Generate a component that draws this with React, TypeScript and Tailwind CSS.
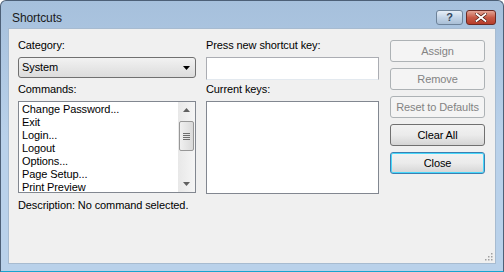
import { ChevronDown } from 'lucide-react'

const commands = [
  'Change Password...',
  'Exit',
  'Login...',
  'Logout',
  'Options...',
  'Page Setup...',
  'Print Preview',
]

const font = "font-['Liberation_Sans',Arial,sans-serif]"

function DialogButton({ label, disabled, isDefault }: { label: string; disabled?: boolean; isDefault?: boolean }) {
  if (disabled) {
    return (
      <button
        disabled
        className="h-[22px] w-[95px] rounded-[3px] border border-[#adb2b5] bg-[#f4f4f4] text-[11px] text-[#838383]"
      >
        {label}
      </button>
    )
  }
  return (
    <button
      className={
        'h-[22px] w-[95px] rounded-[3px] border bg-gradient-to-b from-[#f2f2f2] via-[#ebebeb] to-[#d5d5d5] text-[11px] text-black ' +
        (isDefault ? 'border-[#3c7fb1] shadow-[inset_0_0_0_1px_#48d8fb]' : 'border-[#707070]')
      }
    >
      {label}
    </button>
  )
}

function ScrollArrow({ up }: { up?: boolean }) {
  return (
    <div className="flex h-[16px] w-full items-center justify-center">
      <svg width="7" height="4" viewBox="0 0 7 4">
        {up ? <path d="M0 4 L3.5 0 L7 4 Z" fill="#606060" /> : <path d="M0 0 L7 0 L3.5 4 Z" fill="#606060" />}
      </svg>
    </div>
  )
}

export default function App() {
  return (
    <div className={`${font} h-[272px] w-[504px] overflow-hidden tracking-[-0.1px]`}>
      <div className="flex h-full w-full flex-col rounded-t-[6px] border border-[#4d6077] border-b-[#19a4cf] bg-gradient-to-b from-[#a6c0dc] via-[#b9d1ea] to-[#b9d1ea]">
        {/* title bar */}
        <div className="flex h-[27px] shrink-0 items-start justify-between pl-[11px] pr-[7px]">
          <div className="pt-[8px] text-[12px] text-[#1a1a1a]">Shortcuts</div>
          <div className="flex gap-[3px] pt-[9px]">
            <div className="flex h-[15px] w-[27px] items-center justify-center rounded-[3px] border border-[#6d8299] bg-gradient-to-b from-[#e6eef7] via-[#c3d4e7] to-[#a9bfd6] text-[11px] font-bold leading-none text-[#33465c]">
              ?
            </div>
            <div className="flex h-[15px] w-[30px] items-center justify-center rounded-[3px] border border-[#6b2a24] bg-gradient-to-b from-[#e3a597] via-[#c75a47] to-[#b73d2a]">
              <svg width="12" height="9" viewBox="0 0 12 9">
                <path d="M1.5 1 L10.5 8 M10.5 1 L1.5 8" stroke="#4a1710" strokeWidth="3.2" strokeLinecap="square" />
                <path d="M1.5 1 L10.5 8 M10.5 1 L1.5 8" stroke="#ffffff" strokeWidth="1.8" strokeLinecap="square" />
              </svg>
            </div>
          </div>
        </div>

        {/* client area */}
        <div className="relative mx-[7px] mb-[7px] flex flex-1 border border-[#a7bbd0] bg-[#f0f0f0] pl-[9px] pt-[10px] text-[11px] text-black">
          {/* left column */}
          <div className="flex w-[178px] flex-col">
            <div className="h-[13px] leading-[13px]">Category:</div>
            <div className="mt-[5px] flex h-[21px] items-center justify-between rounded-[3px] border border-[#707070] bg-gradient-to-b from-[#f2f2f2] to-[#dcdcdc] pl-[3px] pr-[5px]">
              <span>System</span>
              <svg width="7" height="4" viewBox="0 0 7 4">
                <path d="M0 0 L7 0 L3.5 4 Z" fill="#000" />
              </svg>
            </div>
            <div className="mt-[5px] h-[13px] leading-[13px]">Commands:</div>
            <div className="mt-[5px] flex h-[92px] border border-[#828790] bg-white">
              <div className="flex-1 pl-[3px] pt-[1px]">
                {commands.map((c) => (
                  <div key={c} className="h-[13px] leading-[13px]">
                    {c}
                  </div>
                ))}
              </div>
              <div className="flex w-[17px] flex-col bg-gradient-to-r from-[#e8e8e8] to-[#f5f5f5]">
                <ScrollArrow up />
                <div className="mx-[1px] mt-[3px] flex h-[30px] items-center justify-center rounded-[2px] border border-[#979797] bg-gradient-to-r from-[#f0f0f0] to-[#dadada]">
                  <div className="flex flex-col gap-[1px]">
                    <div className="h-px w-[7px] bg-[#6d6d6d]" />
                    <div className="h-px w-[7px] bg-[#6d6d6d]" />
                    <div className="h-px w-[7px] bg-[#6d6d6d]" />
                    <div className="h-px w-[7px] bg-[#6d6d6d]" />
                  </div>
                </div>
                <div className="flex-1" />
                <ScrollArrow />
              </div>
            </div>
            <div className="mt-[6px] h-[13px] leading-[13px]">Description: No command selected.</div>
          </div>

          {/* middle column */}
          <div className="ml-[10px] flex w-[173px] flex-col">
            <div className="h-[13px] leading-[13px]">Press new shortcut key:</div>
            <div className="mt-[5px] h-[23px] border border-[#abadb3] border-b-[#e3e9ef] bg-white" />
            <div className="mt-[3px] h-[13px] leading-[13px]">Current keys:</div>
            <div className="mt-[5px] h-[93px] border border-[#828790] bg-white" />
          </div>

          {/* button column */}
          <div className="ml-[11px] flex flex-col gap-[6px] pt-[1px]">
            <DialogButton label="Assign" disabled />
            <DialogButton label="Remove" disabled />
            <DialogButton label="Reset to Defaults" disabled />
            <DialogButton label="Clear All" />
            <DialogButton label="Close" isDefault />
          </div>

          {/* size grip */}
          <svg className="absolute bottom-[2px] right-[2px]" width="10" height="10" viewBox="0 0 10 10">
            {[
              [8, 2],
              [8, 5],
              [5, 5],
              [8, 8],
              [5, 8],
              [2, 8],
            ].map(([x, y]) => (
              <rect key={`${x}-${y}`} x={x} y={y} width="1.5" height="1.5" fill="#a0a0a0" />
            ))}
          </svg>
        </div>
      </div>
    </div>
  )
}
